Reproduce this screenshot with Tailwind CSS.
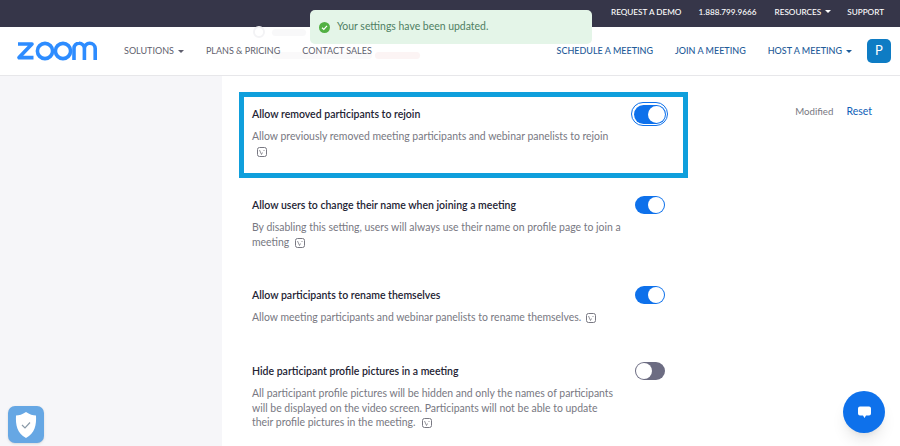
<!DOCTYPE html>
<html><head><meta charset="utf-8">
<script src="https://cdn.jsdelivr.net/npm/@tailwindcss/browser@4"></script>
</head>
<body class="m-0 h-[446px] w-[900px] overflow-hidden bg-white font-['Lato','Noto_Sans',sans-serif] antialiased relative">
<header class="relative">
  <div class="flex h-[27px] items-center justify-end bg-[#363649] pr-[16px] text-[8.2px] font-medium text-white gap-[18px] pb-[3px]">
    <span class="-mr-[1px]">REQUEST A DEMO</span><span>1.888.799.9666</span>
    <span class="flex items-center gap-[4px]">RESOURCES <span class="h-0 w-0 border-x-[3px] border-t-[3px] border-x-transparent border-t-white"></span></span>
    <span class="-ml-[2px]">SUPPORT</span>
  </div>
  <div class="relative flex h-[49px] items-center border-b border-[#e7e7ea] bg-white pl-[16px] pr-[9px]">
    <div class="absolute left-[253px] top-[-1px] h-[12px] w-[12px] rounded-full border-[2px] border-[#f3f3f5]"></div>
    <div class="absolute left-[272px] top-[2px] h-[7px] w-[34px] rounded-sm bg-[#f8f8f9]"></div>
    <div class="absolute left-[272px] top-[25px] h-[7px] w-[100px] rounded-sm bg-[#faf9fa]"></div>
    <div class="absolute left-[375px] top-[25px] h-[7px] w-[45px] rounded-sm bg-[#fcf4f4]"></div>
    <svg width="83" height="20" viewBox="0 0 83 20" class="relative mr-[25px] shrink-0" fill="none" stroke="#2d8cff" stroke-width="3.6">
      <path d="M2 3h14L3 16.600h14.500" stroke-linejoin="round"/>
      <circle cx="29" cy="10" r="7.600"/>
      <circle cx="47" cy="10" r="7.600" />
      <path d="M58 19V7.500a5 5 0 0 1 5-5.200a5.200 5.200 0 0 1 5.400 5.200V19M68.400 7.500a5.200 5.200 0 0 1 5.300-5.200a5.400 5.400 0 0 1 5.500 5.200V19"/>
    </svg>
    <nav class="relative flex items-center gap-[22px] text-[9px] text-[#5f5f6e]">
      <span class="flex items-center gap-[4px]">SOLUTIONS <span class="h-0 w-0 border-x-[3px] border-t-[3px] border-x-transparent border-t-[#5f5f6e]"></span></span>
      <span>PLANS &amp; PRICING</span><span>CONTACT SALES</span>
    </nav>
    <nav class="ml-auto flex items-center gap-[22px] text-[9px] font-medium text-[#1f5c99]">
      <span>SCHEDULE A MEETING</span><span>JOIN A MEETING</span>
      <span class="flex items-center gap-[4px]">HOST A MEETING <span class="h-0 w-0 border-x-[3px] border-t-[3px] border-x-transparent border-t-[#1f5c99]"></span></span>
    </nav>
    <div class="ml-[15px] flex h-[24px] w-[24px] items-center justify-center rounded-[5px] bg-[#0e7cc4] text-[13px] text-white">P</div>
  </div>
</header>
<main class="flex h-[370px] overflow-hidden">
  <aside class="w-[222px] shrink-0 bg-[#f6f6f9]"></aside>
  <div class="flex flex-1 pl-[17px]">
    <div class="w-[449px] shrink-0 pt-[16px]">
      <section class="h-[86px] border-[5px] border-[#0f9fdc] pl-[8px] pr-[15px] pt-[9px]">
        <div class="flex items-start justify-between">
          <div class="w-[365px]">
            <h3 class="text-[10.5px] leading-[16px] font-semibold text-[#232333]">Allow removed participants to rejoin</h3>
            <p class="mt-[7px] text-[10.45px] leading-[15px] text-[#787882]">Allow previously removed meeting participants and webinar panelists to rejoin<br><span class="ml-[4px] inline-block align-middle"><svg width="12" height="12" viewBox="0 0 12 12" fill="none" stroke="#787882"><rect x="1.500" y="1.500" width="9" height="9" rx="2"/><path d="M3.500 4l2 4.500 1-2M8 4v1" stroke-width=".8"/></svg></span></p>
          </div>
          <div class="mt-[-4px] h-[24px] w-[37px] rounded-full border-[1.5px] border-[#0e71eb] bg-white p-[1.5px]">
            <div class="flex h-full w-full items-center justify-end rounded-full bg-[#0e71eb] pr-[1px]"><div class="h-[17px] w-[17px] rounded-full bg-white"></div></div>
          </div>
        </div>
      </section>
      <section class="flex h-[90px] items-start justify-between pl-[13px] pr-[23px] pt-[19px]">
        <div class="w-[372px]">
          <h3 class="text-[10.5px] leading-[16px] font-semibold text-[#232333]">Allow users to change their name when joining a meeting</h3>
          <p class="mt-[7px] text-[10.45px] leading-[15px] text-[#787882]">By disabling this setting, users will always use their name on profile page to join a meeting <span class="ml-[2px] inline-block align-middle"><svg width="12" height="12" viewBox="0 0 12 12" fill="none" stroke="#787882"><rect x="1.500" y="1.500" width="9" height="9" rx="2"/><path d="M3.500 4l2 4.500 1-2M8 4v1" stroke-width=".8"/></svg></span></p>
        </div>
        <div class="mt-[-1px] flex h-[18px] w-[30px] items-center justify-end rounded-full bg-[#0e71eb] pr-[1px]"><div class="h-[16px] w-[16px] rounded-full bg-white"></div></div>
      </section>
      <section class="flex h-[76px] items-start justify-between pl-[13px] pr-[23px] pt-[19px]">
        <div class="w-[372px]">
          <h3 class="text-[10.5px] leading-[16px] font-semibold text-[#232333]">Allow participants to rename themselves</h3>
          <p class="mt-[7px] text-[10.45px] leading-[15px] text-[#787882]">Allow meeting participants and webinar panelists to rename themselves. <span class="ml-[1px] inline-block align-middle"><svg width="12" height="12" viewBox="0 0 12 12" fill="none" stroke="#787882"><rect x="1.500" y="1.500" width="9" height="9" rx="2"/><path d="M3.500 4l2 4.500 1-2M8 4v1" stroke-width=".8"/></svg></span></p>
        </div>
        <div class="mt-[-1px] flex h-[18px] w-[30px] items-center justify-end rounded-full bg-[#0e71eb] pr-[1px]"><div class="h-[16px] w-[16px] rounded-full bg-white"></div></div>
      </section>
      <section class="flex items-start justify-between pl-[13px] pr-[23px] pt-[19px]">
        <div class="w-[372px]">
          <h3 class="text-[10.5px] leading-[16px] font-semibold text-[#232333]">Hide participant profile pictures in a meeting</h3>
          <p class="mt-[7px] w-[365px] text-[10.45px] leading-[14.500px] text-[#787882]">All participant profile pictures will be hidden and only the names of participants will be displayed on the video screen. Participants will not be able to update their profile pictures in the meeting. <span class="ml-[3px] inline-block align-middle"><svg width="12" height="12" viewBox="0 0 12 12" fill="none" stroke="#787882"><rect x="1.500" y="1.500" width="9" height="9" rx="2"/><path d="M3.500 4l2 4.500 1-2M8 4v1" stroke-width=".8"/></svg></span></p>
        </div>
        <div class="mt-[-1px] flex h-[18px] w-[30px] items-center justify-start rounded-full bg-[#6c6c82] pl-[1px]"><div class="h-[16px] w-[16px] rounded-full bg-white"></div></div>
      </section>
    </div>
    <div class="flex flex-1 items-start justify-end gap-[13px] pr-[28px] pt-[27px] text-[9.7px] leading-[16px]">
      <span class="text-[#787882]">Modified</span><span class="text-[10.500px] text-[#0e5fb8]">Reset</span>
    </div>
  </div>
</main>
<div class="absolute left-[310px] top-[10px] flex h-[34px] w-[282px] items-center gap-[7px] rounded-[5px] bg-[#e4f5e8] pl-[9px] text-[10.45px] text-[#4f7f63]">
  <svg width="11" height="11" viewBox="0 0 11 11"><circle cx="5.500" cy="5.500" r="5.500" fill="#52b043"/><path d="M3 5.700l1.800 1.700 3.200-3.600" stroke="#fff" stroke-width="1.200" fill="none"/></svg>
  <span>Your settings have been updated.</span>
</div>
<div class="absolute left-[8px] top-[406px] flex h-[37px] w-[36px] items-center justify-center rounded-[7px] bg-[#66a7e4] shadow">
  <svg width="24" height="28" viewBox="0 0 24 28"><path d="M12 1C8.500 3.500 5 4.500 2 4.500C1.500 14 3 22 12 27C21 22 22.500 14 22 4.500C19 4.500 15.500 3.500 12 1Z" fill="#fff"/><path d="M8 14l3 3 5-5.500" fill="none" stroke="#8a9aa8" stroke-width="1.200"/></svg>
</div>
<div class="absolute left-[843px] top-[391px] flex h-[42px] w-[42px] items-center justify-center rounded-full bg-[#0e71eb] shadow-lg">
  <svg width="15" height="15" viewBox="0 0 15 15"><path d="M3 1.500h9a2 2 0 0 1 2 2v5a2 2 0 0 1-2 2H9L7.500 13 6 10.500H3a2 2 0 0 1-2-2v-5a2 2 0 0 1 2-2Z" fill="#fff"/></svg>
</div>
</body></html>
